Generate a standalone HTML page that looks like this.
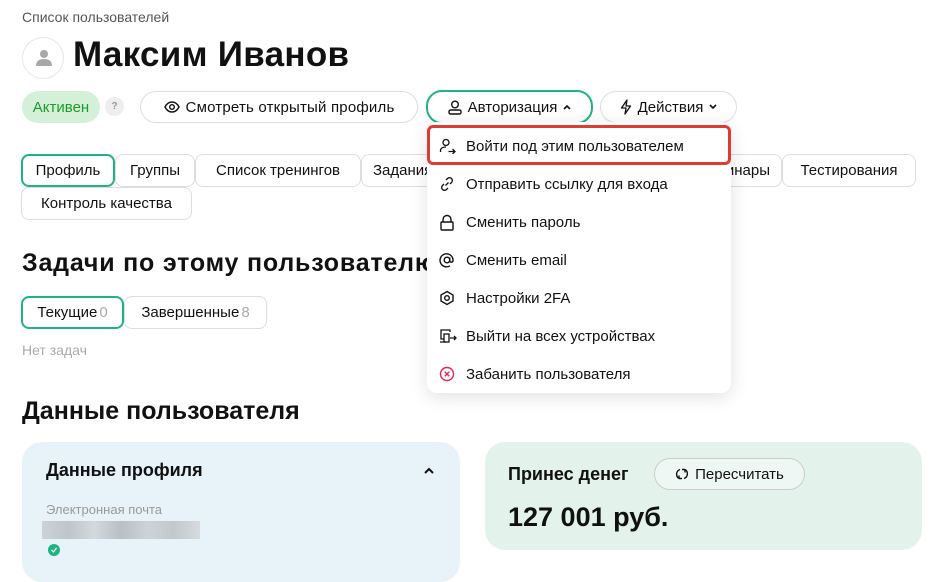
<!DOCTYPE html>
<html><head><meta charset="utf-8">
<style>
*{box-sizing:border-box;margin:0;padding:0}
body{width:950px;height:567px;overflow:hidden;background:#fff;font-family:"Liberation Sans",sans-serif;color:#111;position:relative}
.a{position:absolute}
.pill{position:absolute;border:1px solid #ddd;border-radius:16px;background:#fff;font-size:15px;display:flex;align-items:center;justify-content:center;gap:6px;color:#111}
.tab{position:absolute;border:1px solid #ddd;border-radius:8px;background:#fff;font-size:15px;display:flex;align-items:center;justify-content:center;height:33px}
.green{border:2px solid #1fb382}
.dd{position:absolute;left:427px;top:122px;width:304px;height:271px;background:#fff;border-radius:10px;box-shadow:0 4px 18px rgba(0,0,0,.12)}
.it{position:absolute;left:0;width:304px;height:38px;display:flex;align-items:center;font-size:15px;color:#111}
.it svg{position:absolute;left:12px}
.it span{position:absolute;left:39px}
</style></head><body>
<div class="a" style="left:22px;top:9px;font-size:14px;color:#555">Список пользователей</div>
<div class="a" style="left:22px;top:37px;width:42px;height:42px;border-radius:50%;border:1px solid #e6e6e6;background:#fff">
<svg class="a" style="left:12px;top:11px" width="18" height="18" viewBox="0 0 18 18"><circle cx="9" cy="5" r="4" fill="#a8a8a8"/><path d="M1 17c0-5 3-7 8-7s8 2 8 7z" fill="#a8a8a8"/></svg></div>
<div class="a" style="left:73px;top:35px;font-size:35px;font-weight:bold;letter-spacing:0.3px">Максим Иванов</div>

<div class="a" style="left:22px;top:91px;width:78px;height:32px;border-radius:16px;background:#d5f0d9;color:#1a9a2c;font-size:15px;display:flex;align-items:center;justify-content:center">Активен</div>
<div class="a" style="left:105px;top:97px;width:19px;height:19px;border-radius:50%;background:#eee;color:#999;font-size:10px;display:flex;align-items:center;justify-content:center;font-weight:bold">?</div>
<div class="pill" style="left:140px;top:91px;width:278px;height:32px;letter-spacing:0.2px"><svg width="16" height="12" viewBox="0 0 16 12"><path d="M1 6C3 2 6 1 8 1s5 1 7 5c-2 4-5 5-7 5S3 10 1 6z" fill="none" stroke="#111" stroke-width="1.4"/><circle cx="8" cy="6" r="2.3" fill="none" stroke="#111" stroke-width="1.4"/></svg>Смотреть открытый профиль</div>
<div class="pill green" style="left:426px;top:90px;width:167px;height:34px"><svg width="14" height="15" viewBox="0 0 14 15"><circle cx="7" cy="4.5" r="3.3" fill="none" stroke="#111" stroke-width="1.4"/><rect x="1" y="10" width="12" height="4" rx="1.5" fill="none" stroke="#111" stroke-width="1.4"/></svg>Авторизация<svg width="8" height="6" viewBox="0 0 8 6"><path d="M1 5l3-3 3 3" fill="none" stroke="#111" stroke-width="1.6"/></svg></div>
<div class="pill" style="left:600px;top:91px;width:137px;height:32px"><svg width="12" height="16" viewBox="0 0 12 16"><path d="M7 1L1.5 9H6l-1 6 5.5-8H6z" fill="none" stroke="#111" stroke-width="1.3" stroke-linejoin="round"/></svg>Действия<svg width="8" height="6" viewBox="0 0 8 6"><path d="M1 1l3 3 3-3" fill="none" stroke="#111" stroke-width="1.6"/></svg></div>

<div class="tab green" style="left:21px;top:154px;width:94px">Профиль</div>
<div class="tab" style="left:115px;top:154px;width:80px">Группы</div>
<div class="tab" style="left:195px;top:154px;width:166px">Список тренингов</div>
<div class="tab" style="left:361px;top:154px;width:110px;justify-content:flex-start;padding-left:11px">Задания</div>
<div class="tab" style="left:680px;top:154px;width:102px;justify-content:flex-end;padding-right:11px">Вебинары</div>
<div class="tab" style="left:782px;top:154px;width:134px">Тестирования</div>
<div class="tab" style="left:21px;top:187px;width:171px">Контроль качества</div>

<div class="a" style="left:22px;top:249px;font-size:25px;font-weight:bold;white-space:nowrap;letter-spacing:0.8px">Задачи по этому пользователю</div>
<div class="tab green" style="left:21px;top:296px;width:103px;height:33px">Текущие<span style="color:#aaa;margin-left:2px">0</span></div>
<div class="tab" style="left:124px;top:296px;width:143px;height:33px">Завершенные<span style="color:#aaa;margin-left:2px">8</span></div>
<div class="a" style="left:22px;top:342px;font-size:14px;color:#aaa">Нет задач</div>

<div class="a" style="left:22px;top:397px;font-size:25px;font-weight:bold">Данные пользователя</div>
<div class="a" style="left:22px;top:442px;width:438px;height:140px;background:#e8f3f9;border-radius:20px">
<div class="a" style="left:24px;top:18px;font-size:18px;font-weight:bold">Данные профиля</div>
<svg class="a" style="left:401px;top:25px" width="12" height="8" viewBox="0 0 12 8"><path d="M2 6l4-4 4 4" fill="none" stroke="#111" stroke-width="2"/></svg>
<div class="a" style="left:24px;top:60px;font-size:13px;color:#999">Электронная почта</div>
<div class="a" style="left:20px;top:79px;width:158px;height:18px;background:linear-gradient(90deg,#ccd3d8,#bfc5ca,#d3d9dd,#b9bfc4,#cdd3d8,#c2c8cc,#d5dbdf)"></div>
<div class="a" style="left:26px;top:102px;width:12px;height:12px;border-radius:50%;background:#1fb382"><svg class="a" style="left:2px;top:2px" width="8" height="8" viewBox="0 0 8 8"><path d="M1.5 4l2 2 3-4" fill="none" stroke="#fff" stroke-width="1.2"/></svg></div>
</div>
<div class="a" style="left:485px;top:442px;width:437px;height:108px;background:#e3f3ec;border-radius:20px">
<div class="a" style="left:23px;top:22px;font-size:18px;font-weight:bold">Принес денег</div>
<div class="pill" style="left:169px;top:16px;width:151px;height:32px;background:#eef7f3;border-color:#ccc"><svg width="14" height="14" viewBox="0 0 14 14"><path d="M5 2.5A5 5 0 0 0 4 11.5M9 11.5A5 5 0 0 0 10 2.5M4 11.5l0-3M4 11.5l3 0M10 2.5l0 3M10 2.5l-3 0" fill="none" stroke="#111" stroke-width="1.4"/></svg>Пересчитать</div>
<div class="a" style="left:23px;top:60px;font-size:27px;font-weight:bold">127 001 руб.</div>
</div>

<div class="dd">
<div class="a" style="left:0;top:3px;width:304px;height:40px;border:3px solid #e03b30;border-radius:6px"></div>
<div class="it" style="top:5px"><svg width="18" height="16" viewBox="0 0 18 16"><circle cx="7" cy="4.5" r="3" fill="none" stroke="#111" stroke-width="1.3"/><path d="M1.5 14v-1.5c0-2 2-3.5 5.5-3.5M9.5 13.5h6M13.5 11l2.5 2.5-2.5 2.5" fill="none" stroke="#111" stroke-width="1.3"/></svg><span>Войти под этим пользователем</span></div>
<div class="it" style="top:43px"><svg width="16" height="16" viewBox="0 0 16 16"><path d="M6.5 9.5l3-3M7 4l1.5-1.5a2.8 2.8 0 0 1 4 4L11 8M9 12l-1.5 1.5a2.8 2.8 0 0 1-4-4L5 8" fill="none" stroke="#111" stroke-width="1.3"/></svg><span>Отправить ссылку для входа</span></div>
<div class="it" style="top:81px"><svg width="16" height="17" viewBox="0 0 16 17"><path d="M4 8V5.5a4 4 0 0 1 8 0V8" fill="none" stroke="#111" stroke-width="1.4"/><rect x="2" y="8" width="12" height="8" rx="1" fill="none" stroke="#111" stroke-width="1.4"/></svg><span>Сменить пароль</span></div>
<div class="it" style="top:119px"><svg width="16" height="16" viewBox="0 0 16 16"><circle cx="8" cy="8" r="2.8" fill="none" stroke="#111" stroke-width="1.4"/><path d="M10.8 5.5v3.5c0 1.5 2.7 1.5 3.2 0A6.5 6.5 0 1 0 11 13.8" fill="none" stroke="#111" stroke-width="1.4"/></svg><span>Сменить email</span></div>
<div class="it" style="top:157px"><svg width="16" height="16" viewBox="0 0 16 16"><path d="M8 1.5l6 3.5v6l-6 3.5-6-3.5v-6z" fill="none" stroke="#111" stroke-width="1.4"/><circle cx="8" cy="8" r="2.3" fill="none" stroke="#111" stroke-width="1.4"/></svg><span>Настройки 2FA</span></div>
<div class="it" style="top:195px"><svg width="18" height="16" viewBox="0 0 18 16"><path d="M11 4V2H2v9h3M1 14h6" fill="none" stroke="#111" stroke-width="1.3"/><rect x="5" y="6" width="5" height="8" fill="none" stroke="#111" stroke-width="1.3"/><path d="M11 10h6M15 8l2 2-2 2" fill="none" stroke="#111" stroke-width="1.3"/></svg><span>Выйти на всех устройствах</span></div>
<div class="it" style="top:233px"><svg width="16" height="16" viewBox="0 0 16 16"><circle cx="8" cy="8" r="6.5" fill="none" stroke="#e5254f" stroke-width="1.4"/><path d="M5.8 5.8l4.4 4.4M10.2 5.8l-4.4 4.4" stroke="#e5254f" stroke-width="1.4"/></svg><span>Забанить пользователя</span></div>
</div>
</body></html>
